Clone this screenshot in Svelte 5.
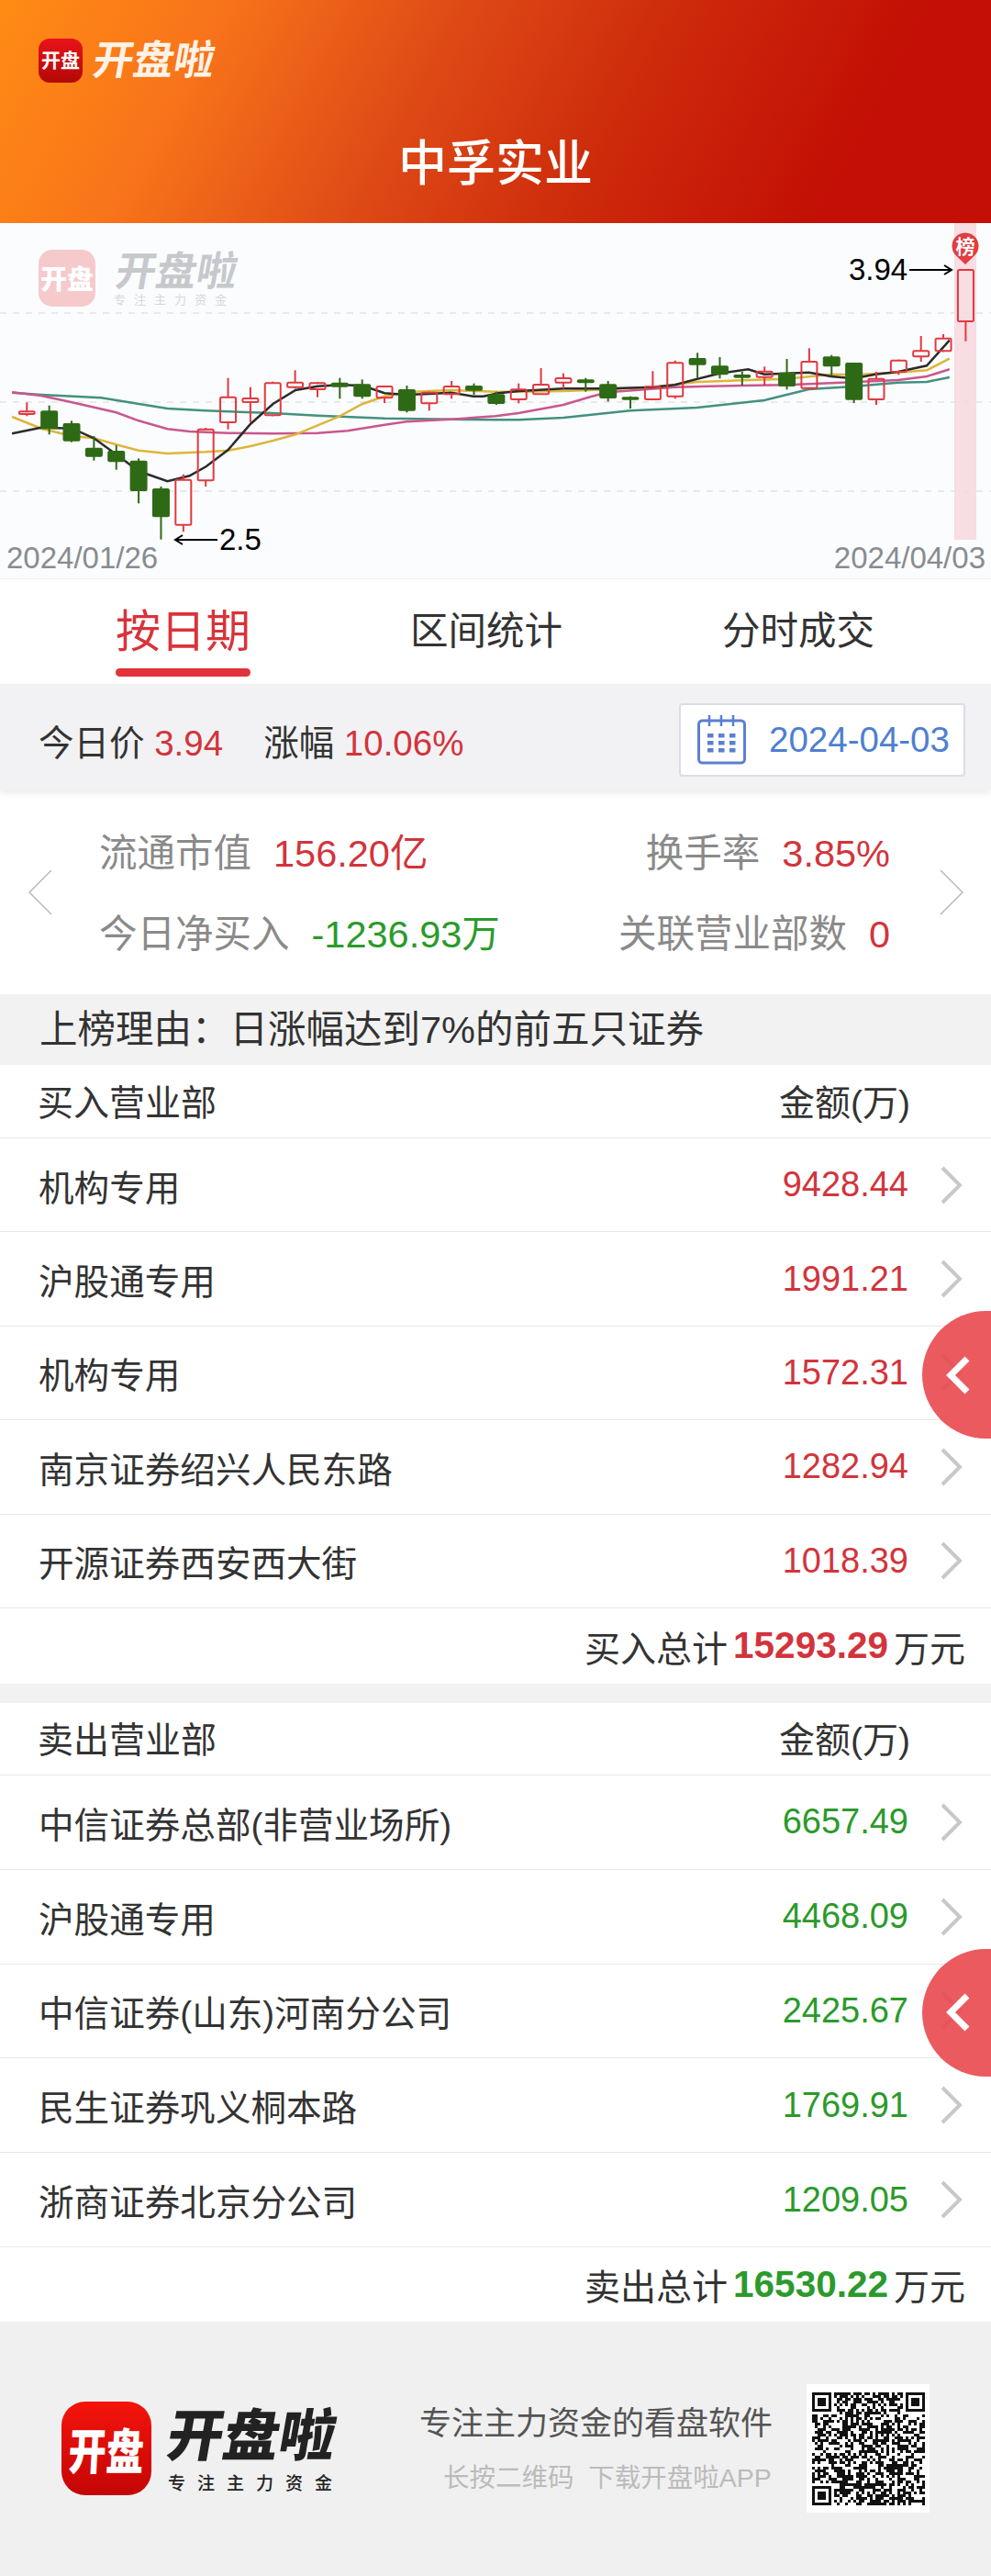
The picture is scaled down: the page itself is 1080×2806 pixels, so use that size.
<script>
  // candle rows read off the reference: [up?, wick top, body top, body bottom, wick bottom]
  const candles = [
    [1,595,625,633,640],[0,605,622,682,700],[0,655,663,722,725],[0,705,743,773,785],[0,735,753,790,815],
    [0,778,785,885,925],[0,870,876,970,1043],[1,830,848,995,1018],[1,678,683,850,870],[1,515,578,660,683],
    [1,545,582,594,660],[1,527,532,637,640],[1,490,530,545,550],[1,528,532,552,578],[0,515,530,545,583],
    [0,520,535,577,583],[1,540,543,580,597],[0,540,552,623,628],[1,560,563,598,622],[1,525,543,568,583],
    [0,533,540,557,570],[0,560,568,600,603],[1,533,553,585,598],[1,483,537,568,570],[1,500,516,530,550],
    [0,515,520,532,560],[0,525,535,582,592],[0,575,577,587,615],[1,493,544,585,585],[1,458,466,575,583],
    [0,433,450,473,515],[0,447,475,505,517],[0,495,504,515,540],[1,478,494,512,540],[0,453,497,543,553],
    [1,418,462,548,553],[0,440,445,478,508],[0,465,465,587,597],[1,495,518,585,603],[1,455,458,495,505],
    [1,378,427,445,462],[1,372,386,427,430],[1,160,162,330,395]
  ];

  const maBlack = [[38,697],[130,677],[156,678],[228,680],[297,712],[368,765],[439,820],[530,853],[600,835],[652,805],[722,750],[793,665],[864,600],[935,555],[1005,542],[1075,538],[1147,540],[1217,565],[1287,570],[1358,567],[1428,563],[1498,575],[1530,575],[1578,565],[1641,558],[1783,550],[1924,550],[2065,545],[2136,538],[2207,518],[2277,500],[2368,487],[2419,503],[2560,497],[2630,510],[2701,517],[2771,503],[2842,495],[2933,475],[3005,392]];
  const maYellow = [[38,642],[130,680],[228,705],[297,712],[368,733],[439,752],[530,762],[650,757],[722,752],[793,738],[864,720],[935,700],[1005,670],[1075,640],[1147,600],[1217,575],[1287,562],[1358,558],[1428,555],[1568,560],[1641,560],[1783,558],[1924,553],[2065,545],[2207,528],[2348,523],[2489,518],[2630,503],[2701,505],[2842,497],[2933,490],[3005,452]];
  const maPink = [[38,562],[130,573],[228,595],[368,628],[439,655],[530,682],[600,690],[722,695],[864,697],[1005,695],[1100,688],[1217,668],[1287,658],[1428,650],[1568,640],[1641,630],[1783,603],[1868,577],[1924,562],[2136,545],[2348,540],[2489,538],[2630,532],[2842,522],[2933,510],[3005,487]];
  const maTeal = [[38,563],[130,570],[320,580],[440,600],[530,615],[650,622],[864,630],[1005,638],[1217,647],[1428,650],[1568,652],[1641,652],[1783,645],[1995,622],[2207,612],[2419,588],[2560,552],[2701,543],[2842,530],[2933,528],[3005,513]];

  const px = (zx) => zx / 2.904;
  const py = (zy) => zy / 3 - 3;
  const pts = (line) => line.map(([x, y]) => px(x).toFixed(1) + "," + py(y).toFixed(1)).join(" ");
  const cx = (i) => 29.3 + i * 24.36;

  const buyRows = [
    ["机构专用", "9428.44"],
    ["沪股通专用", "1991.21"],
    ["机构专用", "1572.31"],
    ["南京证券绍兴人民东路", "1282.94"],
    ["开源证券西安西大街", "1018.39"]
  ];
  const sellRows = [
    ["中信证券总部(非营业场所)", "6657.49"],
    ["沪股通专用", "4468.09"],
    ["中信证券(山东)河南分公司", "2425.67"],
    ["民生证券巩义桐本路", "1769.91"],
    ["浙商证券北京分公司", "1209.05"]
  ];

  // fake qr body, same density as the real one
  const QR = 41;
  function inFinder(x, y) {
    return (x < 8 && y < 8) || (x > QR - 9 && y < 8) || (x < 8 && y > QR - 9);
  }
  let seed = 20240403;
  let qrPath = "";
  for (let y = 0; y < QR; y++) {
    for (let x = 0; x < QR; x++) {
      seed = (seed * 1103515245 + 12345) & 0x7fffffff;
      if (!inFinder(x, y) && (seed >> 16) % 100 < 52) qrPath += `M${x} ${y}h1v1h-1z`;
    }
  }
  const finders = [[0, 0], [QR - 7, 0], [0, QR - 7]];
</script>

<main class="page">
  <header class="top">
    <div class="brand">
      <span class="app-icon">开盘</span>
      <span class="wordmark">开盘啦</span>
    </div>
    <h1>中孚实业</h1>
  </header>

  <section class="chart">
    <svg width="1080" height="387" viewBox="0 0 1080 387">
      <rect x="1040" y="0" width="24" height="345" fill="#f8dde2" />
      {#each [98, 195, 292] as y}
        <line x1="0" x2="1080" y1={y} y2={y} stroke="#e2e2e2" stroke-width="1.5" stroke-dasharray="7 7" />
      {/each}

      <rect x="42" y="29" width="62" height="62" rx="15" fill="#f6c9cb" />
      <text x="73" y="72" class="mark-icon">开盘</text>
      <text x="124" y="68" class="mark-word" transform="skewX(-10)" style="transform-origin: 124px 68px">开盘啦</text>
      <text x="124" y="88" class="mark-tag">专注主力资金</text>

      <polyline points={pts(maTeal)} fill="none" stroke="#43917f" stroke-width="2.5" />
      <polyline points={pts(maPink)} fill="none" stroke="#c9578f" stroke-width="2.5" />
      <polyline points={pts(maYellow)} fill="none" stroke="#dcb63c" stroke-width="2.5" />
      <polyline points={pts(maBlack)} fill="none" stroke="#2b2b2b" stroke-width="2.5" />

      {#each candles as [up, wt, bt, bb, wb], i}
        {#if up}
          <line x1={cx(i)} x2={cx(i)} y1={py(wt)} y2={py(bt)} stroke="#e1393f" stroke-width="2" />
          <line x1={cx(i)} x2={cx(i)} y1={py(bb)} y2={py(wb)} stroke="#e1393f" stroke-width="2" />
          <rect x={cx(i) - 8.5} y={py(bt)} width="17" height={py(bb) - py(bt)} rx="1.5" fill="none" stroke="#e1393f" stroke-width="2" />
        {:else}
          <line x1={cx(i)} x2={cx(i)} y1={py(wt)} y2={py(wb)} stroke="#2e6a16" stroke-width="2" />
          <rect x={cx(i) - 9.5} y={py(bt)} width="19" height={py(bb) - py(bt)} rx="2" fill="#2e6a16" />
        {/if}
      {/each}

      <path d="M191 345h46M199 340l-8 5 8 5" fill="none" stroke="#000" stroke-width="2" />
      <text x="239" y="356" class="mark-price">2.5</text>
      <path d="M991 51h46M1029 46l8 5-8 5" fill="none" stroke="#000" stroke-width="2" />
      <text x="925" y="62" class="mark-price">3.94</text>

      <path d="M1052 45l-10-9.5a14.5 14.5 0 1 1 20 0z" fill="#e23d3f" />
      <text x="1052" y="33" class="pin">榜</text>

      <text x="7" y="376" class="date">2024/01/26</text>
      <text x="1074" y="376" class="date" text-anchor="end">2024/04/03</text>
    </svg>
  </section>

  <nav class="tabs">
    <div class="tab active">按日期</div>
    <div class="tab">区间统计</div>
    <div class="tab">分时成交</div>
  </nav>

  <section class="today">
    <div class="today-text">
      <span>今日价 <b class="red">3.94</b></span>
      <span>涨幅 <b class="red">10.06%</b></span>
    </div>
    <div class="date-box">
      <svg width="54" height="54" viewBox="0 0 54 54">
        <rect x="1.5" y="6" width="50" height="46" rx="4" fill="none" stroke="#5a80d2" stroke-width="3" />
        <path d="M13 0v12M26 0v12M39 0v12" stroke="#5a80d2" stroke-width="2.5" />
        {#each [20, 28, 36] as y}
          {#each [11, 23, 35] as x}
            <rect x={x} y={y} width="6.5" height="4.5" fill="#5a80d2" />
          {/each}
        {/each}
      </svg>
      <span>2024-04-03</span>
    </div>
  </section>

  <section class="stats">
    <svg class="arrow" width="25" height="50" viewBox="0 0 25 50"><path d="M25 1L1 25l24 24" /></svg>
    <div class="stats-grid">
      <div class="stat-row">
        <span class="stat"><em>流通市值</em><b class="red">156.20亿</b></span>
        <span class="stat"><em>换手率</em><b class="red">3.85%</b></span>
      </div>
      <div class="stat-row">
        <span class="stat"><em>今日净买入</em><b class="green">-1236.93万</b></span>
        <span class="stat"><em>关联营业部数</em><b class="red">0</b></span>
      </div>
    </div>
    <svg class="arrow" width="26" height="50" viewBox="0 0 26 50"><path d="M1 1l24 24L1 49" /></svg>
  </section>

  <div class="reason">上榜理由：日涨幅达到7%的前五只证券</div>

  <section class="desk buy">
    <div class="desk-head"><span>买入营业部</span><span>金额(万)</span></div>
    {#each buyRows as [name, amount]}
      <div class="row">
        <span class="name">{name}</span>
        <span class="amount red">{amount}</span>
        <svg class="row-arrow" width="24" height="42" viewBox="0 0 24 42"><path d="M2 2l19 19L2 40" /></svg>
      </div>
    {/each}
    <div class="total">买入总计<b class="red">15293.29</b>万元</div>
    <button class="float" aria-label="收起">
      <svg width="26" height="42" viewBox="0 0 26 42"><path d="M23 3L5 21l18 18" /></svg>
    </button>
  </section>

  <div class="gap"></div>

  <section class="desk sell">
    <div class="desk-head"><span>卖出营业部</span><span>金额(万)</span></div>
    {#each sellRows as [name, amount]}
      <div class="row">
        <span class="name">{name}</span>
        <span class="amount green">{amount}</span>
        <svg class="row-arrow" width="24" height="42" viewBox="0 0 24 42"><path d="M2 2l19 19L2 40" /></svg>
      </div>
    {/each}
    <div class="total">卖出总计<b class="green">16530.22</b>万元</div>
    <button class="float" aria-label="收起">
      <svg width="26" height="42" viewBox="0 0 26 42"><path d="M23 3L5 21l18 18" /></svg>
    </button>
  </section>

  <footer class="foot">
    <div class="foot-icon"><span>开盘</span></div>
    <div class="foot-brand">
      <div class="foot-word">开盘啦</div>
      <div class="foot-tag">专注主力资金</div>
    </div>
    <div class="foot-text">
      <p class="foot-main">专注主力资金的看盘软件</p>
      <p class="foot-sub">长按二维码&nbsp;&nbsp;下载开盘啦APP</p>
    </div>
    <div class="qr">
      <svg width="123" height="123" viewBox="0 0 41 41" shape-rendering="crispEdges">
        <path d={qrPath} fill="#111" />
        {#each finders as [x, y]}
          <path d={`M${x} ${y}h7v7h-7zM${x + 1} ${y + 1}v5h5v-5z`} fill="#111" fill-rule="evenodd" />
          <rect x={x + 2} y={y + 2} width="3" height="3" fill="#111" />
        {/each}
      </svg>
    </div>
  </footer>
</main>

<style>
  :global(body) {
    margin: 0;
    background: #fff;
  }
  .page {
    width: 1080px;
    height: 2806px;
    overflow: hidden;
    font-family: "Liberation Sans", "Noto Sans CJK SC", sans-serif;
    color: #333;
  }
  b, em {
    font-weight: normal;
    font-style: normal;
  }
  .red { color: #d2343c; }
  .green { color: #2b9a2b; }

  .top {
    height: 243px;
    box-sizing: border-box;
    padding: 42px 0 0 42px;
    background: linear-gradient(118deg, #ff8b14 0%, #f8741a 20%, #de4a16 42%, #cd2a0b 62%, #c30f05 84%);
  }
  .brand {
    display: flex;
    align-items: center;
    gap: 12px;
    height: 48px;
  }
  .app-icon {
    width: 48px;
    height: 48px;
    border-radius: 12px;
    background: linear-gradient(#e8141a, #b30808);
    color: #fff;
    font-size: 21px;
    font-weight: 700;
    line-height: 48px;
    text-align: center;
  }
  .wordmark {
    color: #fff2e6;
    font-size: 44px;
    font-weight: 700;
    line-height: 52px;
    transform: skewX(-10deg);
  }
  h1 {
    margin: 57px 0 0 -42px;
    color: #fff;
    font-size: 53px;
    font-weight: 500;
    line-height: 64px;
    text-align: center;
  }

  .chart {
    height: 387px;
    background: #fbfcfe;
    border-bottom: 1px solid #eee;
    margin-bottom: -1px;
  }
  .chart svg { display: block; }
  .mark-icon {
    fill: #fff;
    font-size: 29px;
    font-weight: 900;
    text-anchor: middle;
  }
  .mark-word {
    fill: #c6c8cc;
    font-size: 44px;
    font-weight: 700;
  }
  .mark-tag {
    fill: #d6d8db;
    font-size: 13px;
    letter-spacing: 9px;
  }
  .mark-price {
    fill: #000;
    font-size: 33px;
  }
  .pin {
    fill: #fff;
    font-size: 21px;
    font-weight: 700;
    text-anchor: middle;
  }
  .date {
    fill: #888c90;
    font-size: 33px;
  }

  .tabs {
    display: flex;
    align-items: flex-start;
    gap: 174px;
    height: 115px;
    padding-left: 126px;
    box-sizing: border-box;
  }
  .tab {
    padding-top: 28px;
    font-size: 41.5px;
    line-height: 60px;
    white-space: nowrap;
  }
  .tab.active {
    color: #d9333a;
    font-size: 49px;
  }
  .tab.active::after {
    content: "";
    display: block;
    height: 9px;
    margin-top: 10px;
    border-radius: 5px;
    background: #e2333a;
  }

  .today {
    position: relative;
    display: flex;
    align-items: center;
    justify-content: space-between;
    height: 116px;
    padding: 6px 28px 0 42px;
    box-sizing: border-box;
    background: #f2f2f4;
    box-shadow: 0 3px 6px rgba(0, 0, 0, 0.08);
  }
  .today-text {
    display: flex;
    gap: 44px;
    font-size: 38.5px;
  }
  .date-box {
    display: flex;
    align-items: center;
    gap: 24px;
    width: 312px;
    height: 80px;
    box-sizing: border-box;
    padding-left: 18px;
    background: #fff;
    border: 2px solid #dadde6;
    border-radius: 4px;
    color: #4f7fd0;
    font-size: 38.5px;
  }

  .stats {
    display: flex;
    align-items: center;
    height: 222px;
    padding: 0 30px 0 31px;
    box-sizing: border-box;
  }
  .arrow path {
    fill: none;
    stroke: #b8b8b8;
    stroke-width: 1.5;
  }
  .stats-grid {
    flex: 1;
    display: flex;
    flex-direction: column;
    gap: 28px;
    padding: 0 54px 4px 52px;
  }
  .stat-row {
    display: flex;
    justify-content: space-between;
    height: 60px;
    align-items: center;
    font-size: 41.5px;
  }
  .stat em {
    color: #8a8a8a;
    margin-right: 24px;
  }

  .reason {
    height: 77px;
    padding-left: 43px;
    background: #f2f2f2;
    font-size: 41.5px;
    line-height: 77px;
  }

  .desk { position: relative; }
  .desk-head {
    display: flex;
    justify-content: space-between;
    align-items: center;
    padding: 0 88px 4px 41px;
    box-sizing: border-box;
    border-bottom: 1px solid #e8e8e8;
    font-size: 39px;
  }
  .buy .desk-head { height: 80px; }
  .sell .desk-head { height: 79px; }
  .row {
    display: flex;
    align-items: center;
    padding: 0 31px 0 42px;
    box-sizing: border-box;
    border-bottom: 1px solid #e8e8e8;
    font-size: 38.6px;
  }
  .buy .row { height: 102.4px; }
  .sell .row { height: 102.8px; }
  .name {
    flex: 1;
    color: #333;
  }
  .amount {
    margin-right: 35px;
    font-size: 38px;
  }
  .row-arrow path {
    fill: none;
    stroke: #c8c8c8;
    stroke-width: 4;
  }
  .total {
    display: flex;
    justify-content: flex-end;
    align-items: center;
    gap: 6px;
    padding-right: 28px;
    font-size: 39px;
  }
  .buy .total { height: 82px; }
  .sell .total { height: 81px; }
  .total b {
    font-size: 40.5px;
    font-weight: 700;
  }
  .float {
    position: absolute;
    top: 268px;
    right: 0;
    width: 75px;
    height: 139px;
    padding: 0 0 0 26px;
    border: 0;
    border-radius: 70px 0 0 70px;
    background: rgba(233, 72, 78, 0.9);
  }
  .float svg { display: block; }
  .float path {
    fill: none;
    stroke: #fff;
    stroke-width: 7;
  }
  .gap {
    height: 21px;
    background: #f2f2f2;
  }

  .foot {
    display: flex;
    align-items: center;
    height: 277px;
    padding-left: 67px;
    box-sizing: border-box;
    background: #f0f0f0;
  }
  .foot-icon {
    display: flex;
    align-items: center;
    justify-content: center;
    width: 98px;
    height: 102px;
    border-radius: 26px;
    background: linear-gradient(#f4140c, #c40606);
    color: #fff;
    font-size: 41px;
    font-weight: 900;
    white-space: nowrap;
  }
  .foot-icon span {
    display: block;
    transform: scale(1, 1.3) skewX(-4deg);
  }
  .foot-brand {
    width: 182px;
    margin: 0 92px 0 18px;
  }
  .foot-word {
    color: #222;
    font-size: 61px;
    font-weight: 900;
    line-height: 72px;
    transform: skewX(-10deg);
    white-space: nowrap;
  }
  .foot-tag {
    color: #222;
    font-size: 19px;
    font-weight: 500;
    letter-spacing: 13px;
    white-space: nowrap;
  }
  .foot-text {
    width: 382px;
    text-align: center;
  }
  .foot-text p {
    margin: 0;
    white-space: nowrap;
  }
  .foot-main {
    color: #555;
    font-size: 35px;
    line-height: 50px;
  }
  .foot-text .foot-sub {
    margin-top: 14px;
    padding-left: 26px;
    color: #bbb;
    font-size: 28.5px;
    line-height: 40px;
  }
  .qr {
    display: flex;
    align-items: center;
    justify-content: center;
    width: 134px;
    height: 140px;
    margin-left: 40px;
    background: #fff;
  }
</style>
